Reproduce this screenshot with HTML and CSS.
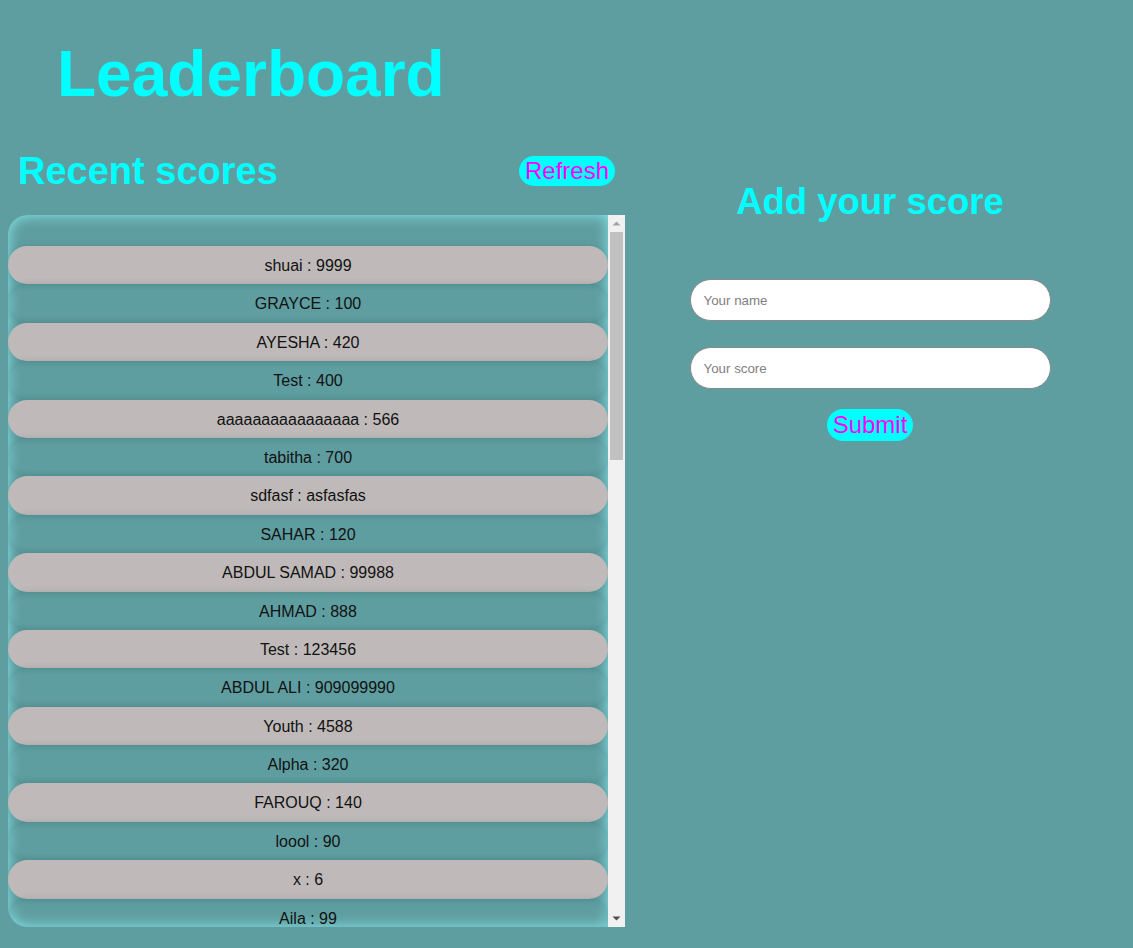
FILE: index.html
```html
<!DOCTYPE html>
<html lang="en">
<head>
<meta charset="utf-8">
<title>Leaderboard</title>
<link rel="stylesheet" href="styles.css">
</head>
<body>
<h1 class="title">Leaderboard</h1>
<main class="layout">
  <section class="recent">
    <div class="recent-head">
      <h2 class="recent-title">Recent scores</h2>
      <button class="btn" type="button">Refresh</button>
    </div>
    <div class="board">
      <ul class="scores">
        <li class="row">shuai : 9999</li>
        <li class="row">GRAYCE : 100</li>
        <li class="row">AYESHA : 420</li>
        <li class="row">Test : 400</li>
        <li class="row">aaaaaaaaaaaaaaaa : 566</li>
        <li class="row">tabitha : 700</li>
        <li class="row">sdfasf : asfasfas</li>
        <li class="row">SAHAR : 120</li>
        <li class="row">ABDUL SAMAD : 99988</li>
        <li class="row">AHMAD : 888</li>
        <li class="row">Test : 123456</li>
        <li class="row">ABDUL ALI : 909099990</li>
        <li class="row">Youth : 4588</li>
        <li class="row">Alpha : 320</li>
        <li class="row">FAROUQ : 140</li>
        <li class="row">loool : 90</li>
        <li class="row">x : 6</li>
        <li class="row">Aila : 99</li>
      </ul>
      <div class="scrollbar" aria-hidden="true">
        <div class="sb-btn">
          <svg width="17" height="17" viewBox="0 0 17 17"><path d="M4.5 10.5 L8.5 6.5 L12.5 10.5 Z" fill="#a3a3a3"/></svg>
        </div>
        <div class="sb-track"><div class="sb-thumb"></div></div>
        <div class="sb-btn">
          <svg width="17" height="17" viewBox="0 0 17 17"><path d="M4.5 6.5 L12.5 6.5 L8.5 10.5 Z" fill="#505050"/></svg>
        </div>
      </div>
    </div>
  </section>
  <section class="add">
    <h2 class="add-title">Add your score</h2>
    <form class="form">
      <input class="field" type="text" placeholder="Your name">
      <input class="field" type="text" placeholder="Your score">
      <button class="btn" type="button">Submit</button>
    </form>
  </section>
</main>
</body>
</html>
```
FILE: styles.css
```css
html, body {
  margin: 0;
  padding: 0;
}
body {
  background: #5f9ea0;
  font-family: "Liberation Sans", Arial, sans-serif;
  padding: 8px;
  height: 948px;
  box-sizing: border-box;
  overflow: hidden;
}
.title {
  margin: 29px 0 0 49px;
  font-size: 64px;
  line-height: 74px;
  font-weight: bold;
  color: #00ffff;
}
.layout {
  display: flex;
  align-items: flex-start;
  margin-top: 38px;
}
.recent {
  width: 617px;
  flex: none;
}
.recent-head {
  display: flex;
  justify-content: space-between;
  align-items: center;
  padding: 0 10px 0 10px;
  height: 44px;
}
.recent-title {
  margin: 0;
  font-size: 38px;
  line-height: 44px;
  font-weight: bold;
  color: #00ffff;
}
.btn {
  font-family: "Liberation Sans", Arial, sans-serif;
  font-size: 24px;
  line-height: 28px;
  padding: 1px 6px;
  border: none;
  border-radius: 15px;
  background: #00ffff;
  color: #ff00ff;
}
.board {
  margin-top: 22px;
  height: 712px;
  display: flex;
}
.scores {
  list-style: none;
  margin: 0;
  padding: 31px 0 0 0;
  width: 600px;
  flex: none;
  overflow: hidden;
  border-radius: 20px 0 0 20px;
  box-shadow: inset 0 0 14px rgba(140, 240, 245, 0.9);
}
.row {
  height: 38.4px;
  box-sizing: border-box;
  padding: 11px 0 9px;
  font-size: 16px;
  line-height: 18.4px;
  text-align: center;
  color: #111;
  border-radius: 20px;
  box-shadow: 0 0 6px rgba(30, 70, 75, 0.16), inset 0 0 7px rgba(20, 60, 65, 0.12);
}
.row:nth-child(odd) {
  background: #bfbab9;
  box-shadow: 0 0 6px rgba(30, 70, 75, 0.16);
}
.scrollbar {
  width: 17px;
  flex: none;
  background: #f1f1f1;
  display: flex;
  flex-direction: column;
}
.sb-btn {
  height: 17px;
  flex: none;
}
.sb-btn svg {
  display: block;
}
.sb-track {
  flex: 1;
  padding: 0 2px;
}
.sb-thumb {
  height: 228px;
  background: #c1c1c1;
}
.add {
  width: 490px;
  flex: none;
  display: flex;
  flex-direction: column;
  align-items: center;
}
.add-title {
  margin: 32px 0 0 0;
  font-size: 36.5px;
  line-height: 42px;
  font-weight: bold;
  color: #00ffff;
}
.form {
  margin-top: 56px;
  display: flex;
  flex-direction: column;
  align-items: center;
}
.field {
  width: 361px;
  height: 42px;
  box-sizing: border-box;
  border: 1px solid #8a8a8a;
  border-radius: 21px;
  padding: 0 13px;
  font-family: "Liberation Sans", Arial, sans-serif;
  font-size: 13.33px;
  background: #fff;
  margin-bottom: 26px;
}
.field::placeholder {
  color: #808080;
}
.field + .field {
  margin-bottom: 20px;
}
.form .btn {
  line-height: 30px;
  padding: 1px 6px;
  border-radius: 16px;
}
```
